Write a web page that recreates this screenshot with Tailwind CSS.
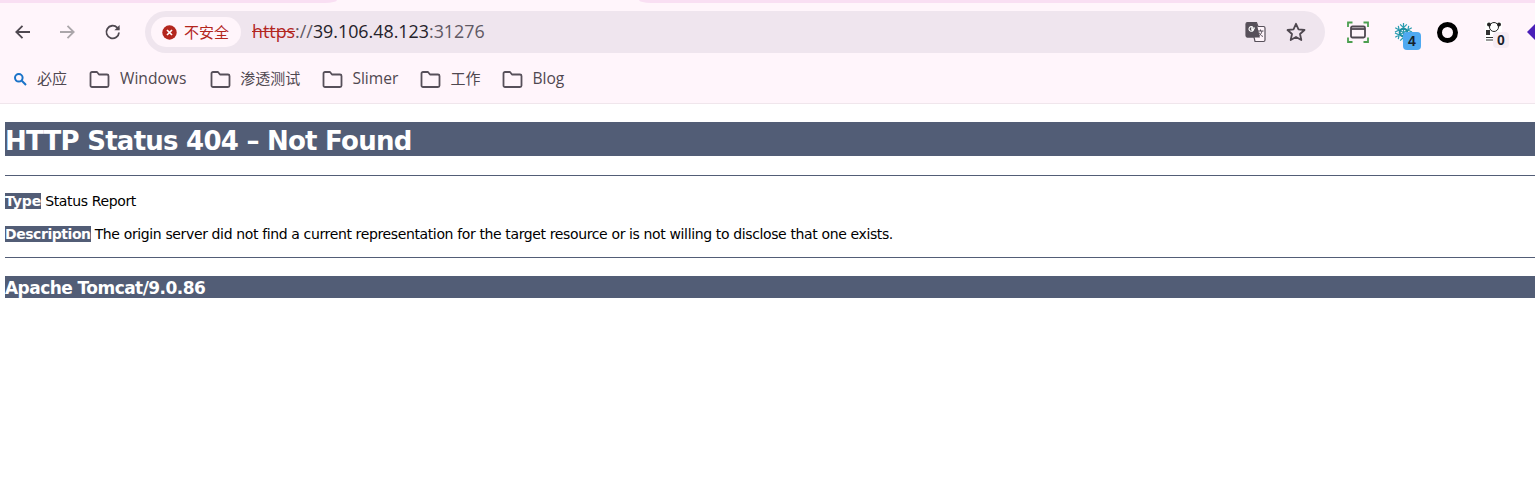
<!DOCTYPE html>
<html lang="en">
<head>
  <meta charset="UTF-8">
  <title>HTTP Status 404 – Not Found</title>
  <script src="https://cdn.jsdelivr.net/npm/@tailwindcss/browser@4"></script>
</head>
<body class="bg-white overflow-hidden">
  <!-- browser chrome -->
  <div class="h-[104px] bg-[#fff5fb] border-b border-[#f0e6ec] relative overflow-hidden font-['Open_Sans','Noto_Sans_CJK_SC',sans-serif]">
    <div class="flex h-[3px]">
      <div class="w-[337px] bg-[#f9dff3] rounded-br-[12px_3px]"></div>
      <div class="w-[302px]"></div>
      <div class="flex-1 bg-[#f9dff3] rounded-bl-[12px_3px]"></div>
    </div>

    <div class="flex items-center h-[42px] mt-[8px]">
      <svg class="shrink-0 ml-[13px] w-[20px] h-[20px]" viewBox="0 0 20 20" fill="none" stroke="#4f4850" stroke-width="1.8"><path d="M17 10H3.500M9.500 3.800 3.300 10l6.200 6.200"/></svg>
      <svg class="shrink-0 ml-[24px] w-[20px] h-[20px]" viewBox="0 0 20 20" fill="none" stroke="#aba6aa" stroke-width="1.8"><path d="M3 10h13.500M10.500 3.800 16.700 10l-6.200 6.200"/></svg>
      <svg class="shrink-0 ml-[26px] w-[20px] h-[20px]" viewBox="0 0 20 20" fill="none" stroke="#4f4850" stroke-width="1.8"><path d="M16 10.500a6.300 6.300 0 1 1-1.800-4.900L16 7.400"/><path d="M16.600 3v5.200h-5.200z" fill="#4f4850" stroke="none"/></svg>

      <div class="shrink-0 ml-[22px] w-[1180px] h-[42px] rounded-full bg-[#efe5ee] flex items-center pl-[6px] pr-[18px]">
        <div class="w-[90px] h-[30px] rounded-full bg-[#fff5fb] flex items-center pl-[11px] text-[15px] text-[#b3261e]">
          <svg class="shrink-0 w-[15px] h-[15px]" viewBox="0 0 15 15"><circle cx="7.500" cy="7.500" r="7.200" fill="#b3261e"/><path d="M5 5l5 5M10 5l-5 5" stroke="#fff" stroke-width="1.700"/></svg>
          <span class="ml-[7px]">不安全</span>
        </div>
        <div class="ml-[11px] text-[17.85px] leading-none text-[#4a4550]"><span class="text-[#b3261e] line-through">https</span><span class="text-[#5f5964]">://</span><span class="text-[#25222a]">39.106.48.123</span><span class="text-[#5f5964]">:31276</span></div>
        <svg class="shrink-0 ml-auto w-[22px] h-[22px]" viewBox="0 0 22 22"><path d="M2.500 1.500h9l1.500 4h5.500a1.500 1.500 0 0 1 1.500 1.500v12a1.500 1.500 0 0 1-1.500 1.500H10l-1-4.500H2.500A1.500 1.500 0 0 1 1 14.500V3a1.500 1.500 0 0 1 1.500-1.500z" fill="#fff5fb" stroke="#57505a" stroke-width="1.200"/><path d="M2.500 1.500h9l3.400 15H2.500A1.500 1.500 0 0 1 1 15V3a1.500 1.500 0 0 1 1.500-1.500z" fill="#57505a"/><path d="M10 7.200H6.800v1.500h1.700a2.300 2.300 0 1 1-.7-2.500" fill="none" stroke="#fff" stroke-width="1.200"/><path d="M13 10h5.500M15.500 8.500V10M17 10c-.5 2.500-2 4.500-4 5.500M14 11.500c.6 1.600 2 3.200 4 4" fill="none" stroke="#57505a" stroke-width="1"/></svg>
        <svg class="shrink-0 ml-[18px] w-[22px] h-[22px]" viewBox="0 0 22 22" fill="none" stroke="#4f4850" stroke-width="1.800" stroke-linejoin="round"><path d="m11 2.800 2.500 5.600 6 .6-4.500 4 1.300 6L11 16l-5.300 3 1.300-6-4.500-4 6-.6z"/></svg>
      </div>

      <svg class="shrink-0 ml-[22px] w-[22px] h-[22px]" viewBox="0 0 22 22" fill="none"><path d="M1 6V1.500h4.500M16.500 1.500H21V6M21 16.500V21h-4.500M5.500 21H1v-4.500" stroke="#4c9f50" stroke-width="1.800"/><rect x="4" y="5.500" width="14" height="11" rx="1.500" stroke="#4f4850" stroke-width="1.800"/><path d="M4 8h14" stroke="#4f4850" stroke-width="1.800"/></svg>

      <div class="shrink-0 ml-[25px] relative w-[19px] h-[19px]">
        <svg class="w-[19px] h-[19px]" viewBox="0 0 20 20" fill="none" stroke="#2a9cb0" stroke-width="1.300"><path d="M10 0v20M1.300 5l17.400 10M18.700 5 1.300 15M6.500 1.500 10 5l3.500-3.500M6.500 18.500 10 15l3.500 3.500M1 9.500l4.500-2-1-4.500M19 9.500l-4.500-2 1-4.500M1 10.500l4.500 2-1 4.500M19 10.500l-4.500 2 1 4.500"/><circle cx="10" cy="10" r="4" stroke-width="2.200" stroke="#1f8fa0"/></svg>
        <div class="absolute left-[9px] top-[9px] w-[18px] h-[18px] rounded-[4px] bg-[#4fa9f1] text-[#17212b] text-[14px] font-bold leading-[18px] text-center font-['Liberation_Sans',sans-serif]">4</div>
      </div>

      <div class="shrink-0 ml-[24px] w-[21px] h-[21px] rounded-full border-[5px] border-black"></div>

      <div class="shrink-0 ml-[27px] relative w-[17px] h-[20px]">
        <svg class="w-[17px] h-[20px]" viewBox="0 0 17 20"><rect width="17" height="20" fill="#fff"/><circle cx="9" cy="5" r="4.500" fill="#fff" stroke="#222" stroke-width="1"/><circle cx="4" cy="2.500" r="2" fill="#222"/><circle cx="14" cy="2.500" r="2" fill="#222"/><path d="M1 8h4v5H1zM1 15h9v1H1zM1 17.500h9v1H1z" fill="#333"/></svg>
        <div class="absolute left-[8px] top-[10px] w-[16px] h-[16px] rounded-[4px] bg-[#f6ecf3] text-[#17212b] text-[14px] font-bold leading-[16px] text-center font-['Liberation_Sans',sans-serif]">0</div>
      </div>

      <svg class="shrink-0 ml-[25px] w-[12px] h-[20px]" viewBox="0 0 12 20"><path d="M0 10l9-9h3v18H9z" fill="#4a1fb8"/></svg>
    </div>

    <div class="flex items-center h-[40px] mt-[6px] text-[15.6px] leading-none text-[#4f4850]">
      <div class="flex items-center ml-[13px]">
        <svg class="w-[14px] h-[14px]" viewBox="0 0 14 14" fill="none" stroke="#1a73c8" stroke-width="2"><circle cx="5.800" cy="5.800" r="3.800"/><path d="M8.800 8.800 13 13"/></svg>
        <span class="ml-[10px] text-[15px] -translate-y-px">必应</span>
      </div>
      <div class="flex items-center ml-[22px]">
        <svg class="w-[21px] h-[17px]" viewBox="0 0 21 17" fill="none" stroke="#57505a" stroke-width="1.800" stroke-linejoin="round"><path d="M1.500 2.500a1.500 1.500 0 0 1 1.500-1.500h5l2 2.500h8a1.500 1.500 0 0 1 1.500 1.500v9.500a1.500 1.500 0 0 1-1.500 1.500H3a1.500 1.500 0 0 1-1.500-1.500z"/></svg>
        <span class="ml-[10px]">Windows</span>
      </div>
      <div class="flex items-center ml-[24px]">
        <svg class="w-[21px] h-[17px]" viewBox="0 0 21 17" fill="none" stroke="#57505a" stroke-width="1.800" stroke-linejoin="round"><path d="M1.500 2.500a1.500 1.500 0 0 1 1.500-1.500h5l2 2.500h8a1.500 1.500 0 0 1 1.500 1.500v9.500a1.500 1.500 0 0 1-1.500 1.500H3a1.500 1.500 0 0 1-1.500-1.500z"/></svg>
        <span class="ml-[9px] text-[15px] -translate-y-px">渗透测试</span>
      </div>
      <div class="flex items-center ml-[22px]">
        <svg class="w-[21px] h-[17px]" viewBox="0 0 21 17" fill="none" stroke="#57505a" stroke-width="1.800" stroke-linejoin="round"><path d="M1.500 2.500a1.500 1.500 0 0 1 1.500-1.500h5l2 2.500h8a1.500 1.500 0 0 1 1.500 1.500v9.500a1.500 1.500 0 0 1-1.500 1.500H3a1.500 1.500 0 0 1-1.500-1.500z"/></svg>
        <span class="ml-[9px]">Slimer</span>
      </div>
      <div class="flex items-center ml-[22px]">
        <svg class="w-[21px] h-[17px]" viewBox="0 0 21 17" fill="none" stroke="#57505a" stroke-width="1.800" stroke-linejoin="round"><path d="M1.500 2.500a1.500 1.500 0 0 1 1.500-1.500h5l2 2.500h8a1.500 1.500 0 0 1 1.500 1.500v9.500a1.500 1.500 0 0 1-1.500 1.500H3a1.500 1.500 0 0 1-1.500-1.500z"/></svg>
        <span class="ml-[9px] text-[15px] -translate-y-px">工作</span>
      </div>
      <div class="flex items-center ml-[22px]">
        <svg class="w-[21px] h-[17px]" viewBox="0 0 21 17" fill="none" stroke="#57505a" stroke-width="1.800" stroke-linejoin="round"><path d="M1.500 2.500a1.500 1.500 0 0 1 1.500-1.500h5l2 2.500h8a1.500 1.500 0 0 1 1.500 1.500v9.500a1.500 1.500 0 0 1-1.500 1.500H3a1.500 1.500 0 0 1-1.500-1.500z"/></svg>
        <span class="ml-[9px]">Blog</span>
      </div>
    </div>
  </div>

  <!-- tomcat error page -->
  <div class="pl-[5px] pt-[18px] font-['DejaVu_Sans',sans-serif] text-black">
    <h1 class="h-[34px] bg-[#525d76] text-white text-[26px] font-bold leading-[38px] tracking-[-0.75px] whitespace-nowrap">HTTP Status 404 – Not Found</h1>
    <hr class="mt-[19px] border-0 h-px bg-[#525d76]">
    <p class="mt-[15px] h-[18px] text-[14px] leading-[20px] tracking-[-0.37px]"><b class="bg-[#525d76] text-white tracking-[-0.1px]">Type</b> Status Report</p>
    <p class="mt-[15px] h-[18px] text-[14px] leading-[20px] tracking-[-0.37px]"><b class="bg-[#525d76] text-white tracking-[-0.45px]">Description</b> The origin server did not find a current representation for the target resource or is not willing to disclose that one exists.</p>
    <hr class="mt-[15px] border-0 h-px bg-[#525d76]">
    <h3 class="mt-[18px] h-[22px] bg-[#525d76] text-white text-[17px] font-bold leading-[25px] tracking-[-0.55px]">Apache Tomcat/9.0.86</h3>
  </div>
</body>
</html>
